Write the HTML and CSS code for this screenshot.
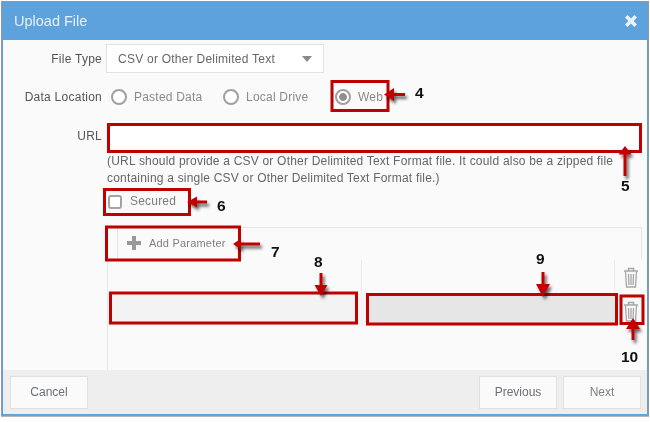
FILE: index.html
```html
<!DOCTYPE html>
<html lang="en">
<head>
<meta charset="utf-8">
<title>Upload File</title>
<link rel="stylesheet" href="styles.css">
</head>
<body>
<div class="stage">
  <div class="modal">
    <header class="modal-head">
      <h1 class="modal-title">Upload File</h1>
      <svg class="close-icon" width="14" height="14" viewBox="0 0 14 14"><path d="M3.6 1 7 4.4 10.4 1 13 3.6 9.6 7 13 10.4 10.4 13 7 9.6 3.6 13 1 10.4 4.4 7 1 3.6Z"/></svg>
    </header>
    <main class="modal-body">
      <div class="row row-type">
        <span class="label">File Type</span>
        <div class="select"><span>CSV or Other Delimited Text</span><i class="caret"></i></div>
      </div>
      <div class="row row-location">
        <span class="label">Data Location</span>
        <div class="radios">
          <span class="radio radio-pasted"><i class="dot"></i>Pasted Data</span>
          <span class="radio radio-local"><i class="dot"></i>Local Drive</span>
          <span class="radio"><i class="dot dot-on"></i>Web</span>
        </div>
      </div>
      <div class="row row-url">
        <span class="label">URL</span>
        <div class="url-input"></div>
      </div>
      <p class="help">(URL should provide a CSV or Other Delimited Text Format file. It could also be a zipped file<br>containing a single CSV or Other Delimited Text Format file.)</p>
      <div class="secured"><i class="check"></i><span class="secured-text">Secured</span></div>
      <section class="panel">
        <div class="panel-bar">
          <div class="add-btn">
            <svg class="plus" width="14" height="14" viewBox="0 0 14 14"><path d="M5 0h4v5h5v4H9v5H5V9H0V5h5Z"/></svg>
            Add Parameter
          </div>
        </div>
        <div class="param-grid">
          <div class="cell cell-a"></div>
          <div class="cell cell-b"></div>
          <div class="cell cell-c">
            <svg class="trash" width="16" height="21" viewBox="0 0 16 21"><path class="t-lid" d="M1 4h14M5.500 3.500V1.500h5v2"/><path class="t-body" d="M2.500 4.500 3.500 20h9l1-15.500M5.500 7l.4 11M8 7v11M10.500 7l-.4 11"/></svg>
          </div>
          <div class="cell cell-a row2"><div class="field"></div></div>
          <div class="cell cell-b row2"><div class="field field-dark"></div></div>
          <div class="cell cell-c row2c">
            <svg class="trash" width="16" height="21" viewBox="0 0 16 21"><path class="t-lid" d="M1 4h14M5.500 3.500V1.500h5v2"/><path class="t-body" d="M2.500 4.500 3.500 20h9l1-15.500M5.500 7l.4 11M8 7v11M10.500 7l-.4 11"/></svg>
          </div>
        </div>
      </section>
    </main>
    <footer class="modal-foot">
      <span class="btn">Cancel</span>
      <span class="foot-right"><span class="btn">Previous</span><span class="btn btn-next">Next</span></span>
    </footer>
  </div>

  <svg class="notes" width="650" height="422" viewBox="0 0 650 422">
    <defs><filter id="sh" x="-60%" y="-60%" width="220%" height="220%"><feDropShadow dx="2" dy="3" stdDeviation="1.800" flood-color="#000" flood-opacity=".6"/></filter></defs>
    <g class="boxes">
      <rect x="332" y="81.500" width="56" height="29"/>
      <rect x="108.500" y="124.500" width="532" height="27"/>
      <rect x="104.500" y="189.500" width="85" height="25"/>
      <rect x="106.500" y="227" width="133" height="33"/>
      <rect x="110.500" y="293" width="246" height="30"/>
      <rect x="367.500" y="294.500" width="249" height="29.500"/>
      <rect x="621" y="296" width="22" height="27.500"/>
    </g>
    <g class="arrows" filter="url(#sh)">
      <path d="M384 94.500l10-6.500v5h11v3H394v5Z"/>
      <path d="M625 146l6.500 8.500H626.500V176h-3V154.500H618.500Z"/>
      <path d="M187 202l10-5.500V200.500h10v3H197v4Z"/>
      <path d="M233 244l8-5.500V242.500h19v3H241v4Z"/>
      <path d="M321 296l-6.500-11H319.500V273h3V285H327.500Z"/>
      <path d="M543 297l-7-13H541.500V272h3V284H550Z"/>
      <path d="M633 318l7 11H634.500V340h-3V329H626Z"/>
    </g>
  </svg>
  <b class="num num-4">4</b>
  <b class="num num-5">5</b>
  <b class="num num-6">6</b>
  <b class="num num-7">7</b>
  <b class="num num-8">8</b>
  <b class="num num-9">9</b>
  <b class="num num-10">10</b>
</div>
</body>
</html>
```
FILE: styles.css
```css
* { box-sizing: border-box; }
html, body { margin: 0; background: #fff; }
body { font-family: "Liberation Sans", Arial, sans-serif; font-size: 12px; color: #666; overflow: hidden; }

.stage { position: relative; width: 650px; height: 422px; padding: 1px 1px 0; filter: blur(.3px); }

.modal {
  width: 648px; height: 415px;
  display: flex; flex-direction: column;
  background: #fafafa;
  border: 2px solid #5ea2dd;
  border-top: 1px solid #5ea2dd;
  outline: 1px solid #8f9aa3;
  outline-offset: -1px;
  box-shadow: 0 1px 0 #b5b5b5;
}

.modal-head {
  flex: none; height: 38px;
  display: flex; align-items: center; justify-content: space-between;
  padding: 0 9px 0 11px;
  background: #5ea2dd;
}
.modal-title { margin: 0; font-size: 14.500px; font-weight: 400; color: #e6f0fa; }
.close-icon { fill: #e8f2fb; }

.modal-body { flex: 1; min-height: 0; overflow: hidden; background: #fafafa; }

.row { display: flex; align-items: center; }
.label { width: 99px; text-align: right; color: #555; letter-spacing: .25px; white-space: nowrap; }
.row-type { margin-top: 4px; height: 29px; }
.select {
  margin-left: 4px; width: 218px; height: 29px;
  display: flex; align-items: center; justify-content: space-between;
  padding: 0 11px 0 11px;
  background: #fff; border: 1px solid #e2e2e2;
  letter-spacing: .24px;
}
.caret { width: 0; height: 0; border: 5.500px solid transparent; border-top: 6px solid #8a8a8a; border-bottom: 0; }

.row-location { margin-top: 14px; height: 20px; }
.radios { display: flex; margin-left: 9px; }
.radio { display: flex; align-items: center; gap: 7px; color: #8a8a8a; letter-spacing: .22px; }
.radio-pasted { width: 112px; }
.radio-local { width: 112px; }
.dot { width: 16px; height: 16px; border: 2px solid #a0a0a0; border-radius: 50%; background: #fff; display: flex; }
.dot-on { background: radial-gradient(circle, #8f8f8f 0 3.500px, #fff 4.200px); }

.row-url { margin-top: 18px; height: 28px; align-items: flex-start; }
.row-url .label { line-height: 22px; }
.url-input { margin-left: 5px; width: 533px; height: 28px; background: #fff; }

.help { margin: 0 0 0 104px; line-height: 17px; color: #666; letter-spacing: .2px; white-space: nowrap; }

.secured { margin: 6px 0 0 105px; height: 18px; display: flex; align-items: center; gap: 8px; color: #7d7d7d; letter-spacing: .2px; }
.secured-text { line-height: 14px; margin-bottom: 3px; }
.check { width: 14px; height: 14px; border: 2px solid #a3a3a3; border-radius: 3px; background: #fff; }

.panel { margin: 16px 0 0 104px; width: 535px; }
.panel-bar { height: 33px; border: 1px solid #e6e6e6; border-bottom: 0; }
.add-btn {
  margin-left: 9px; height: 32px;
  display: flex; align-items: center; gap: 8px;
  padding: 0 0 3px 9px; border-left: 1px solid #e6e6e6;
  font-size: 11px; color: #808080; letter-spacing: .2px;
}
.plus { fill: #999; }

.param-grid {
  display: grid; grid-template-columns: 254px 253px 28px; grid-template-rows: 34px 32px;
  height: 110px; border-left: 1px solid #e6e6e6;
}
.cell { border-right: 1px solid #ececec; }
.cell-c { border-right: 0; display: flex; justify-content: center; align-items: center; padding-left: 3px; }
.row2 { background: #f4f4f4; border-right: 0; padding: 1px 4px 0 3px; }
.row2c { background: #f8f8f8; padding-top: 2px; }
.cell-b.row2 { padding-right: 0; }
.field { height: 30px; background: #f3f3f3; }
.field-dark { background: #e6e6e6; margin-left: 2px; }
.trash { fill: none; stroke: #a6a6a6; stroke-width: 1.300; }
.t-lid { stroke-width: 1.500; }

.modal-foot {
  flex: none; height: 44px;
  display: flex; align-items: center; justify-content: space-between;
  padding: 0 6px 0 7px;
  background: #eeeeee;
}
.foot-right { display: flex; gap: 6px; }
.btn {
  width: 78px; height: 33px;
  display: flex; align-items: center; justify-content: center;
  background: #fafafa; border: 1px solid #e0e0e0;
  color: #6b6f78;
}
.btn-next { color: #7d8088; }

.notes { position: absolute; left: 0; top: 0; pointer-events: none; }
.boxes { fill: none; stroke: #be0000; stroke-width: 3; }
.arrows { fill: #c00000; }

.num { position: absolute; font-size: 15.500px; line-height: 16px; font-weight: 700; color: #111; }
.num-4 { left: 415px; top: 85px; }
.num-5 { left: 621px; top: 178px; }
.num-6 { left: 217px; top: 198px; }
.num-7 { left: 271px; top: 244px; }
.num-8 { left: 314px; top: 254px; }
.num-9 { left: 536px; top: 251px; }
.num-10 { left: 621px; top: 349px; }
```
